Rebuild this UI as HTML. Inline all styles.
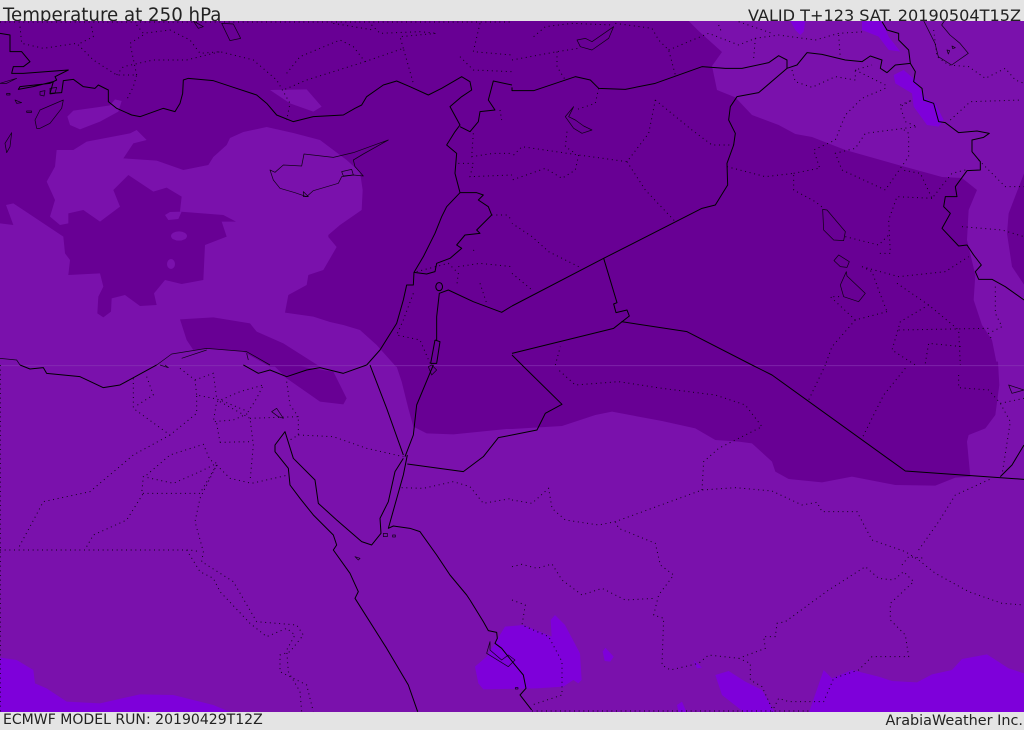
<!DOCTYPE html>
<html><head><meta charset="utf-8"><style>
html,body{margin:0;padding:0;background:#e4e4e4}
body{width:1024px;height:729px;position:relative;overflow:hidden;font-family:"DejaVu Sans",sans-serif;color:#222}
div{position:absolute;white-space:nowrap}
svg{position:absolute;left:0;top:21px}
.d{fill:#680094}.b{fill:#7e00da}
.s{fill:none;stroke:#000;stroke-width:3;stroke-linejoin:round}
.t{fill:none;stroke:#000;stroke-width:2.2;stroke-linejoin:round;opacity:.85}
.o{fill:none;stroke:#000;stroke-width:3;stroke-dasharray:3 11;opacity:.85;stroke-linecap:butt}
</style></head><body>
<div style="left:3px;top:5px;font-size:18.2px;line-height:21px">Temperature at 250 hPa</div>
<div style="right:3px;top:5px;font-size:16.1px;line-height:21px">VALID T+123 SAT. 20190504T15Z</div>
<div style="left:3px;top:712px;font-size:14.05px;line-height:17px">ECMWF MODEL RUN: 20190429T12Z</div>
<div style="right:1px;top:713px;font-size:14.4px;line-height:17px">ArabiaWeather Inc.</div>
<svg width="1024" height="691" viewBox="0 21 1024 691" style="background:#7a11ac">
<g transform="scale(.33333)">
<!-- NW quadrant -->
<path class="d" d="M0,63L1560,63L1560,1100L1188,1100L1130,1035L1080,990L1030,975L990,966L940,950L855,938L865,885L920,855L925,825L970,810L1010,741L985,711L985,705L1020,675L1085,630L1088,570L1080,516L1040,480L960,420L880,399L800,381L730,396L690,414L680,435L640,471L625,495L550,510L470,482L370,475L400,430L440,420L410,390L390,400L260,425L220,450L170,450L165,500L140,545L165,600L150,650L180,675L205,670L205,640L250,630L300,665L360,620L340,570L385,525L460,575L500,563L545,590L540,635L670,645L708,665L665,665L680,710L615,735L610,840L545,852L495,840L462,880L470,915L420,918L375,885L335,895L333,935L310,952L292,940L295,890L310,860L300,820L205,825L210,780L195,760L190,710L100,650L40,610L18,615L40,675L0,670Z"/>
<path fill="#7a11ac" d="M202,350L220,332L290,322L330,316L345,298L365,303L355,335L300,365L240,388L210,375Z"/>
<path fill="#7a11ac" d="M810,270L920,268L965,320L940,335L870,310Z"/>
<path fill="#7a11ac" d="M495,645L510,636L545,635L535,657L505,660Z"/>
<ellipse cx="537" cy="708" rx="24" ry="14" fill="#7a11ac"/>
<ellipse cx="513" cy="792" rx="12" ry="15" fill="#7a11ac"/>
<path class="d" d="M540,958L640,952L750,970L770,995L850,1030L960,1100L810,1100L730,1055L620,1045L580,1050L560,1020Z"/>
<g transform="translate(1536,0)">
<path class="d" d="M-30,40L530,63L560,93L630,156L600,198L615,270L670,292L720,345L800,375L850,402L900,411L1000,450L1170,498L1290,531L1350,534L1395,570L1370,630L1365,720L1390,825L1385,900L1410,975L1440,1020L1455,1095L1455,1120L-30,1120Z"/>
<path class="d" d="M1540,510L1490,640L1485,700L1500,800L1540,860Z"/>
<path class="b" d="M835,63L880,63L875,95L865,105L850,90Z"/>
<path class="b" d="M1050,63L1110,63L1130,110L1165,155L1130,150L1100,110L1050,90Z"/>
<path class="b" d="M1145,225L1175,210L1210,240L1240,295L1270,310L1295,360L1280,380L1245,375L1205,320L1200,280L1150,250Z"/>
</g>
<g transform="translate(1536,1095)">
<path class="d" d="M-30,-10L1458,-10L1462,60L1450,150L1420,190L1370,210L1365,230L1375,335L1330,338L1270,362L1150,360L1020,335L930,352L830,342L790,320L780,290L720,235L680,230L610,225L550,190L450,168L300,140L250,150L150,183L0,192L-30,192Z"/>
<path class="b" d="M272,860L280,848L305,875L295,890L278,888Z"/>
<path class="b" d="M610,930L650,918L700,950L750,975L790,1045L700,1045L630,990Z"/>
<path class="b" d="M495,1020L510,1010L525,1045L500,1045Z"/>
<path class="b" d="M545,885L570,908L555,910Z"/>
<path class="b" d="M890,1045L935,915L960,940L1020,915L1100,935L1140,948L1215,952L1260,928L1320,915L1350,882L1425,868L1490,910L1536,925L1536,1045Z"/>
</g>
<g transform="translate(0,1095)">
<path class="d" d="M1185,-10L1205,50L1225,130L1240,185L1280,205L1360,208L1540,190L1540,-10Z"/>
<path class="d" d="M810,-10L1000,20L1040,100L1030,118L960,110L860,40Z"/>
<path class="b" d="M0,878L50,885L100,915L105,955L140,970L200,1010L300,1015L420,988L520,990L640,1020L700,1045L0,1045Z"/>
</g>
<!-- Yemen-side bright blob (zoom coordinates) -->
<g transform="translate(1320,1800)">
<path class="b" d="M105,200L140,170L195,80L250,75L335,110L332,60L345,45L375,75L420,160L425,240L415,250L400,240L370,260L290,265L130,268L115,250Z"/>
</g>
<path fill="none" stroke="#8a3ab5" stroke-width="3" opacity=".6" d="M0,1097L3072,1097"/>

<!-- dotted NW -->
<path class="o" d="M60,80L65,130L130,145L230,130L280,180L350,225L410,225L400,260L380,300M275,80L280,110L240,130M410,75L430,100L510,90L570,120L600,160L660,155L760,180L830,240L870,310L860,360M350,225L370,200L460,180L560,180L660,155M410,225L390,130L430,105M860,220L900,170L1020,120L1060,140L1095,185L1000,215L920,240L850,270M1095,185L1210,145L1240,250M1210,145L1200,110L1310,100L1260,95L1140,100L1110,70M1000,70L1120,90M1440,70L1420,155L1536,165M1380,170L1420,210L1536,215M1420,400L1415,470L1480,460L1536,460M1375,490L1420,490L1410,530L1536,525M1475,645L1520,645L1536,660M1250,815L1345,790L1375,820L1370,860M1375,800L1440,790L1536,800M1440,850L1460,910M1240,880L1210,960L1190,1005L1260,1020L1290,1090M1500,330L1505,360M1420,750L1430,760M0,66L1536,66"/>
<!-- dotted NE -->
<g transform="translate(1536,0)"><path class="o" d="M65,110L100,80L180,70L300,75M0,180L135,155L200,145M135,155L135,200L160,240M310,70L420,85L440,120L470,150L490,225M470,150L590,100L680,135L730,115L800,105L910,120L980,100L1060,95M620,75L630,100M680,65L780,100M980,105L985,175M730,115L725,175M840,210L850,245L900,262L970,230L1030,240L1030,210L1080,195M1030,210L1120,255M1120,265L1050,295L1000,345L970,420L905,450L925,510M1165,315L1200,300L1165,320L1180,365L1215,380L1060,400L1030,445L970,460L990,510L1120,570L1165,505L1190,470L1190,400L1170,385M1315,360L1375,305L1530,300M1265,90L1275,170L1310,195L1370,200L1420,235L1480,205L1510,240L1536,250M1400,480L1480,560L1536,560M1360,510L1320,520L1260,595L1225,520L1170,510M1260,595L1155,590L1130,660L1135,760L1100,760M845,520L920,505M645,500L760,530L845,520L845,570L910,605L935,625M260,265L250,310L190,330M430,300L410,400L345,485L200,465L30,440L0,470M430,300L540,390L600,435L665,435M345,485L400,570L490,665M200,465L190,510L150,535L100,505L0,540M165,395L160,440L190,460M200,800L110,755L60,710L0,670M0,820L60,870M1000,710L1100,735L1135,700M1050,800L1160,830L1300,815L1370,770M1050,800L1080,815L1100,870L1125,935M1155,850L1250,915L1340,990L1345,1095M1125,935L1030,960L955,890L985,890M1030,960L960,1040L940,1095M1250,915L1165,965L1140,1050L1210,1095M1350,680L1470,690L1536,710M1160,990L1430,985M1450,860L1450,940L1470,980L1430,1000L1440,1020M130,1095L145,1040M1240,1090L1250,1030L1350,1040"/></g>
<!-- dotted SW -->
<g transform="translate(0,1095)"><path class="o" d="M0,555L570,555L600,560M400,40L400,130L510,210L590,145L590,90L640,100L660,105L745,140L770,100L790,60L720,80L650,110L640,170L700,165L745,145M440,35L460,90L405,125M540,10L585,45L590,90M585,45L640,25L650,100M510,210L400,270L270,380L130,410L55,550M440,330L510,270L610,238L630,285L650,295L600,320L520,355L430,335L425,385L600,385L650,300L600,400L585,470L610,560L605,590L700,650L770,770L890,780L910,810L870,860L840,870L840,920L920,960L940,1040M260,545L280,510L380,465L430,385M660,110L750,160L760,240L750,350M660,232L755,230M650,175L660,232M750,160L895,155L895,210L870,225M860,50L870,120L895,155M895,210L1000,215L1100,250L1210,275M650,300L690,340L755,355L865,330M560,555L600,620L640,640L660,680L750,775L800,815L860,790L885,810L860,855L865,920L900,980L905,1040M1205,368L1270,370L1360,350L1410,365L1450,415L1536,400M1,0L1,1040"/></g>
<!-- dotted SE -->
<g transform="translate(1536,1095)"><path class="o" d="M0,405L60,415L110,370L120,430L160,465L260,480L310,470L570,375L670,368L780,378L870,420L915,412L930,440L1035,440L1080,525L1180,560L1220,585L1270,625L1370,680L1470,715L1536,720M310,470L320,490L430,535L445,600L485,630L440,690L425,750L455,760L450,900L475,915L560,895L590,870L680,880L760,850L755,815L790,815L795,775L820,770L950,675L1060,605L1100,640L1145,645L1175,620L1205,650L1135,715L1135,765L1180,810L1190,875L1080,875L1040,915L965,940L935,1010L830,1010L800,1000L780,1040M680,880L715,895L715,945L750,965L780,1030M0,605L30,598L75,610L120,597L150,645L210,690L270,670L340,705L430,700M1220,555L1280,470L1330,390L1440,340M1170,600L1190,575L1240,580M570,375L575,290L620,250L750,185L700,120L610,90L450,70L320,50L190,60L140,15M940,0L890,105M1180,10L1115,90L1050,220M1340,30L1340,68L1430,75L1465,115L1495,170L1470,330M1465,115L1536,100M0,705L40,720L30,780L110,815L150,890L150,990L60,1020M60,1038L900,1038"/></g>

<!-- solid NW -->
<path class="s" d="M0,100L30,105L30,155L65,155L90,185L70,200L40,200L35,220L70,220L205,210L165,230L170,240L150,250L60,260L55,268L100,260L160,245L150,280L185,278L190,242L220,238L250,260L285,265L295,255L325,270L325,305L350,325L395,345L420,350L490,325L525,335L540,310L548,280L550,240L565,235L640,242L700,262L770,285L800,310L830,345L880,365L940,350L1030,345L1065,325L1085,315L1100,290L1150,255L1190,243L1230,260L1285,285L1325,265L1385,230L1410,245L1415,270L1385,290L1350,320L1380,375L1365,395L1340,435L1370,460L1365,520L1380,578L1430,578L1450,585L1435,600L1465,620L1475,645L1430,690L1440,700L1395,705L1370,735L1385,745L1350,775L1310,790L1305,815L1280,822L1242,817L1240,855L1220,855L1210,900L1190,970L1140,1050L1100,1095"/>
<path class="s" d="M1536,255L1480,243L1465,300L1485,330L1440,335L1435,365L1410,395L1380,380"/>
<path class="s" d="M1536,918L1505,937L1420,905L1345,870L1318,880L1310,950L1310,1020M1305,1020L1320,1025L1310,1090L1292,1090L1305,1020M1318,848a10,12 0 1,1 -1,0Z"/>
<path class="s" d="M1380,578L1340,620L1325,650L1305,700L1270,770L1242,817"/>
<path class="t" d="M810,510L825,517L850,495L905,498L912,462L1000,472L1060,458L1165,420L1090,462L1060,480L1065,500L1090,528L1060,525L1025,530L1015,550L940,572L920,590L885,578L840,565L820,540Z"/>
<path class="t" d="M1025,515L1055,508L1060,525L1030,528ZM910,575L925,590L910,590Z"/>
<path class="t" d="M110,385L105,360L120,330L190,300L185,325L150,370L120,385ZM15,430L35,398L30,440L20,458ZM0,250L50,235L20,250ZM20,280h10v5h-10ZM45,300L65,308L50,310ZM80,333h15v4h-15ZM120,275L135,272L132,288L120,285ZM150,265L170,262L165,280L150,282Z"/>
<path class="t" d="M665,70L700,72L722,115L690,122Z"/>
<path class="t" d="M580,63L610,80L595,85Z"/>
<path class="t" d="M0,1075L50,1080L60,1095M470,1095L515,1062L620,1045L740,1055L810,1095M545,1075L620,1050M740,1060L745,1080"/>
<!-- solid NE -->
<g transform="translate(1536,0)">
<path class="s" d="M0,262L0,272L65,272L190,230L235,240L260,265L340,268L430,250L570,200L640,205L690,205L770,188L800,167L825,180L825,205L855,195L885,158L930,163L1000,180L1050,185L1075,168L1110,180L1105,205L1125,218L1150,195L1195,190L1190,150L1160,120L1160,100L1125,90L1110,65"/>
<path class="s" d="M1195,190L1210,215L1205,245L1230,265L1235,300L1265,310L1280,365L1300,368L1340,398L1395,393L1432,400L1415,412L1380,420L1380,455L1405,485L1405,510L1365,512L1330,560L1335,590L1300,590L1295,620L1315,640L1290,685L1340,738L1365,735L1385,765L1408,795L1390,815L1400,838L1440,838L1480,860L1536,900"/>
<path class="s" d="M825,205L740,278L675,290L655,320L650,360L670,400L665,435L645,490L647,555L610,615L570,625L275,775L0,918"/>
<path class="s" d="M275,775L315,908L305,912L312,938L345,930L352,948L305,985L0,1060M328,965L525,995L720,1095M0,1065L30,1095"/>
<path class="t" d="M195,120L220,115L240,125L305,80L290,115L240,150L205,140Z"/>
<path class="t" d="M185,320L160,350L185,385L210,400L240,390L215,378L190,360L170,350Z"/>
<path class="t" d="M932,628L945,630L1000,695L995,722L965,720L935,690Z"/>
<path class="t" d="M966,782L980,765L1012,785L1005,802L985,800Z"/>
<path class="t" d="M1003,815L1005,828L1060,880L1040,905L995,890L985,855Z"/>
<path class="t" d="M1234,60L1259,110L1269,130L1279,170L1319,195L1369,160L1344,130L1314,105L1289,75L1299,60M1305,150l8,2l-4,10zM1320,138l10,5l-8,3z"/>
</g>
<!-- solid SW -->
<g transform="translate(0,1095)">
<path class="s" d="M60,0L90,12L130,8L140,25L240,35L310,68L360,60L470,0"/>
<path class="s" d="M730,0L775,25L810,15L860,35L920,15L960,8L1030,25L1100,0"/>
<path class="t" d="M480,0L505,8L495,0"/>
<path class="s" d="M1110,0L1160,130L1210,270M1300,0L1250,120L1240,210L1215,275M1222,297L1390,320L1450,275L1495,218L1536,210"/>
<path class="t" d="M1285,5L1295,0L1310,15L1295,30Z"/>
<path class="s" d="M1222,270L1210,330L1165,490L1180,483L1230,490L1260,500L1310,570L1350,630L1400,690L1410,705"/>
<path class="s" d="M1210,280L1185,320L1165,410L1140,460L1143,505L1115,540L1085,530L1010,465L955,415L945,345L880,280L855,200L825,240L825,260L865,310L870,360L900,400L940,450L1000,510L1010,540L1000,555L1050,625L1075,680L1065,700L1160,850L1225,960L1253,1040"/>
<path class="t" d="M815,140L830,130L850,160L835,155ZM1065,575L1080,580L1075,585ZM1150,505h12v10h-12ZM1178,510h8v6h-8Z"/>
</g>
<!-- solid SE -->
<g transform="translate(1536,1095)">
<path class="s" d="M30,0L150,118L100,145L75,195L0,210M720,0L780,30L1180,318L1536,343M1465,335L1500,300L1536,240"/>
<path class="t" d="M1490,60L1536,75L1500,85Z"/>
</g>
<!-- Bab-el-Mandeb style coast (zoom coordinates) -->
<g transform="translate(1320,1800)">
<path class="s" d="M90,0L130,65L145,92L170,97L172,115L165,130L185,145L205,170L225,195L250,225L258,265L240,285L275,330"/>
<path class="t" d="M150,125L140,160L205,200L225,180L205,165L185,180L150,150Z"/>
<path class="t" d="M226,263h8v4h-8Z"/>
</g>
</g>
</svg>
</body></html>
